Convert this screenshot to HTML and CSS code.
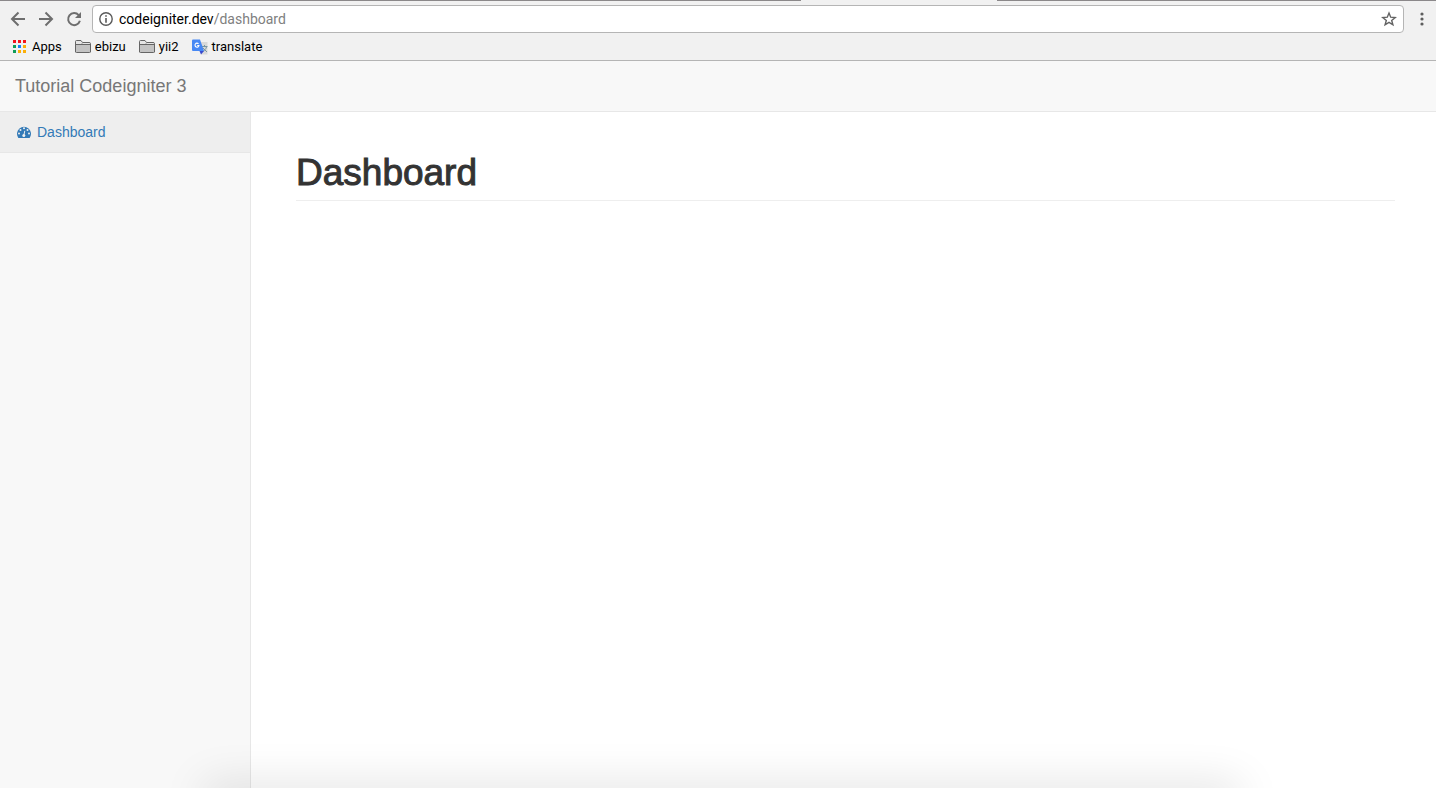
FILE: index.html
```html
<!DOCTYPE html>
<html lang="en">
<head>
<meta charset="utf-8">
<meta name="viewport" content="width=device-width, initial-scale=1">
<title>Dashboard</title>
<link rel="stylesheet" href="styles.css">
</head>
<body>
<div class="browser">
  <div class="tab-edge"><span class="tab-gap"></span></div>
  <div class="toolbar">
    <div class="nav-buttons">
      <button class="icon-button" type="button" aria-label="Back"><svg width="16" height="16" viewBox="0 0 16 16" fill="none" stroke="#6e6e6e" stroke-width="2"><path d="M15 8H2.5M8.5 1.5L2 8l6.500 6.500"/></svg></button>
      <button class="icon-button" type="button" aria-label="Forward"><svg width="16" height="16" viewBox="0 0 16 16" fill="none" stroke="#6e6e6e" stroke-width="2"><path d="M1 8h12.500M7.500 1.500L14 8l-6.500 6.500"/></svg></button>
      <button class="icon-button" type="button" aria-label="Reload"><svg width="16" height="16" viewBox="0 0 16 16"><path d="M12.700 4.200A6 6 0 1 0 13.900 9.800" fill="none" stroke="#6e6e6e" stroke-width="2"/><path d="M15 1v6H9z" fill="#6e6e6e"/></svg></button>
    </div>
    <div class="address-bar">
      <svg width="14" height="14" viewBox="0 0 14 14"><circle cx="7" cy="7" r="6.200" fill="none" stroke="#5a5a5a" stroke-width="1.400"/><path d="M6.200 3.200h1.600v1.500H6.200zM6.200 6h1.600v4.700H6.200z" fill="#5a5a5a"/></svg>
      <div class="url"><span class="host">codeigniter.dev</span>/dashboard</div>
      <button class="icon-button" type="button" aria-label="Bookmark this page"><svg width="16" height="16" viewBox="0 0 16 16" fill="none" stroke="#636363" stroke-width="1.400"><path d="M8 2l1.700 4.200 4.500.3-3.500 2.900 1.200 4.400L8 11.300l-3.900 2.500 1.200-4.400-3.500-2.900 4.500-.3z"/></svg></button>
    </div>
    <button class="icon-button menu-button" type="button" aria-label="Menu"><svg width="16" height="16" viewBox="0 0 16 16" fill="#5d5d5d"><circle cx="8" cy="3" r="1.600"/><circle cx="8" cy="8" r="1.600"/><circle cx="8" cy="13" r="1.600"/></svg></button>
  </div>
  <nav class="bookmarks" aria-label="Bookmarks">
    <a class="bookmark" href="#"><svg width="13" height="13" viewBox="0 0 13 13"><path d="M0 0h3v3H0zM5 0h3v3H5zM10 0h3v3h-3z" fill="#f5141b"/><path d="M0 5h3v3H0zM0 10h3v3H0z" fill="#0f9d58"/><path d="M5 5h3v3H5z" fill="#1583f5"/><path d="M10 5h3v3h-3zM5 10h3v3H5zM10 10h3v3h-3z" fill="#fbaf08"/></svg><span>Apps</span></a>
    <a class="bookmark folder" href="#"><svg width="16" height="13" viewBox="0 0 16 13"><path d="M.5 12V1.500q0-1 1-1H6l1.500 2H14q1.500 0 1.500 1V12q0 .5-1 .5h-13q-1 0-1-.5z" fill="#e5e5e5" stroke="#656565"/><path d="M1 5h14v7H1z" fill="#c3c3c3"/><path d="M1 4.500h5l1-1" fill="none" stroke="#656565"/><path d="M6 4.500h9" stroke="#656565"/></svg><span>ebizu</span></a>
    <a class="bookmark folder" href="#"><svg width="16" height="13" viewBox="0 0 16 13"><path d="M.5 12V1.500q0-1 1-1H6l1.500 2H14q1.500 0 1.500 1V12q0 .5-1 .5h-13q-1 0-1-.5z" fill="#e5e5e5" stroke="#656565"/><path d="M1 5h14v7H1z" fill="#c3c3c3"/><path d="M1 4.500h5l1-1" fill="none" stroke="#656565"/><path d="M6 4.500h9" stroke="#656565"/></svg><span>yii2</span></a>
    <a class="bookmark folder" href="#"><svg width="16" height="16" viewBox="0 0 16 16"><path d="M6 3h9.500v12.500H9z" fill="#d9d9d9"/><path d="M9.500 7.500h6M12.500 6v1.500M14.500 8c-.5 2-2 3.500-4 4.500M11 9l4 4" fill="none" stroke="#7895a0"/><path d="M1 .5h7L12 12H1q-1 0-1-1V1.500q0-1 1-1z" fill="#4788f4"/><path d="M7.500 12H12l-3 3.500z" fill="#3949ce"/><path d="M6.500 4.800A2 2 0 1 0 7 6.500H5.200" fill="none" stroke="#fff" stroke-width="1.100"/></svg><span>translate</span></a>
  </nav>
</div>
<div class="page">
  <header class="navbar"><a class="brand" href="#">Tutorial Codeigniter 3</a></header>
  <div class="content">
    <nav class="sidebar" aria-label="Main">
      <a class="side-link" href="#"><svg width="14" height="12" viewBox="0 0 14 12"><path d="M1.100 11.500A7 7 0 1 1 12.900 11.500q-.2.500-.7.500H1.800q-.5 0-.7-.5z" fill="#337ab7"/><g fill="#eee"><circle cx="2" cy="7.500" r="1"/><circle cx="3.500" cy="4" r="1"/><circle cx="7" cy="2.300" r="1"/><circle cx="10.500" cy="4" r="1"/><circle cx="12" cy="7.500" r="1"/><circle cx="6.800" cy="9.500" r="1.500"/></g><path d="M6.800 9.500l1-4.700" stroke="#eee"/></svg><span>Dashboard</span></a>
    </nav>
    <main class="main"><h1 class="title">Dashboard</h1></main>
  </div>
  <div class="shade"></div>
</div>
</body>
</html>
```
FILE: styles.css
```css
* { box-sizing: border-box; }
body {
  margin: 0;
  min-height: 100vh;
  display: flex;
  flex-direction: column;
  font-family: "Liberation Sans", Arial, sans-serif;
  background: #fff;
}
a { text-decoration: none; }
svg { display: block; flex: none; }

.browser {
  background: #f1f1f1;
  border-bottom: 1px solid #b5b5b5;
  font-family: Roboto, sans-serif;
}
.tab-edge { height: 1px; background: #8b888a; padding-left: 801px; }
.tab-gap { display: block; width: 196px; height: 1px; background: #f1f1f1; }
.toolbar {
  display: flex;
  align-items: center;
  gap: 10px;
  padding: 4px 6px 0 10px;
}
.nav-buttons { display: flex; gap: 12px; }
.icon-button { padding: 0; border: 0; background: none; flex: none; }
.address-bar {
  flex: 1;
  height: 28px;
  display: flex;
  align-items: center;
  gap: 6px;
  padding: 0 6px;
  background: #fff;
  border: 1px solid #b5b5b5;
  border-radius: 4px;
}
.url { flex: 1; font-size: 14px; line-height: 20px; color: #808080; }
.host { color: #000; }
.bookmarks {
  height: 27px;
  display: flex;
  align-items: center;
  gap: 13px;
  padding-left: 13px;
}
.bookmark {
  display: flex;
  align-items: center;
  gap: 6px;
  font-size: 13px;
  line-height: 16px;
  color: #000;
}
.folder { gap: 4px; }

.page {
  position: relative;
  flex: 1;
  display: flex;
  flex-direction: column;
  overflow: hidden;
}
.navbar {
  padding: 15px;
  background: #f8f8f8;
  border-bottom: 1px solid #e7e7e7;
  line-height: 20px;
}
.brand { display: block; font-size: 18px; color: #777; }
.content { flex: 1; display: flex; }
.sidebar {
  width: 251px;
  flex: none;
  background: #f8f8f8;
  border-right: 1px solid #e7e7e7;
}
.side-link {
  display: flex;
  align-items: center;
  gap: 6px;
  padding: 10px 17px;
  background: #eee;
  border-bottom: 1px solid #e7e7e7;
  font-size: 14px;
  line-height: 20px;
  color: #337ab7;
}
.main { flex: 1; padding: 41px 41px 0 45px; }
.title {
  margin: 0;
  padding-bottom: 7px;
  border-bottom: 1px solid #eee;
  font-size: 37px;
  font-weight: 400;
  line-height: 40px;
  color: #333;
  -webkit-text-stroke: 1px #333;
}
.shade {
  position: absolute;
  left: 208px;
  right: 200px;
  bottom: -20px;
  height: 20px;
  box-shadow: 0 0 44px 4px rgba(0, 0, 0, 0.13);
  pointer-events: none;
}
```
